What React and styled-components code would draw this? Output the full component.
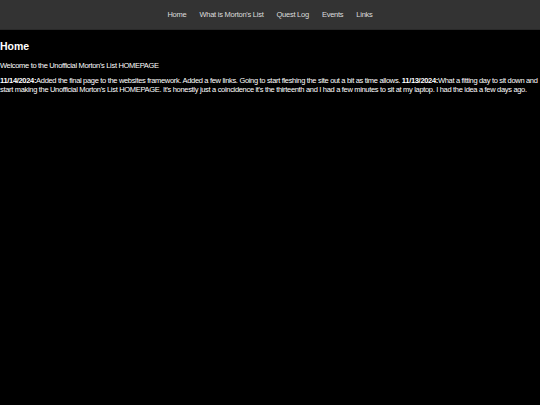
import styled, { createGlobalStyle } from "styled-components";

const Global = createGlobalStyle`
    html, body {
        margin: 0;
        padding: 0;
        background: #000;
        color: #fff;
        font-family: "Liberation Sans", Arial, sans-serif;
    }
`;

const Nav = styled.nav`
    background-color: #333;
    height: 29px;
    border-bottom: 1px solid #2a2a2a;
    display: flex;
    justify-content: center;
    align-items: center;
    gap: 13px;
`;

const NavLink = styled.a`
    color: #ddd;
    font-size: 7.5px;
    letter-spacing: -0.25px;
    text-decoration: none;
`;

const Main = styled.main`
    padding: 0;
`;

const Title = styled.h1`
    font-size: 10.5px;
    line-height: 12px;
    font-weight: bold;
    margin: 10px 0 9px;
`;

const Text = styled.p`
    font-size: 7.5px;
    letter-spacing: -0.32px;
    line-height: 9px;
    margin: 0 0 6px;
`;

const links = ["Home", "What is Morton's List", "Quest Log", "Events", "Links"];

export default function App() {
    return (
        <>
            <Global />
            <Nav>
                {links.map((l) => (
                    <NavLink key={l} href="#">{l}</NavLink>
                ))}
            </Nav>
            <Main>
                <Title>Home</Title>
                <Text>Welcome to the Unofficial Morton's List HOMEPAGE</Text>
                <Text>
                    <b>11/14/2024:</b>Added the final page to the websites framework. Added a few links. Going to start fleshing the site out a bit as time allows. <b>11/13/2024:</b>What a fitting day to sit down and start making the Unofficial Morton's List HOMEPAGE. It's honestly just a coincidence it's the thirteenth and I had a few minutes to sit at my laptop. I had the idea a few days ago.
                </Text>
            </Main>
        </>
    );
}
